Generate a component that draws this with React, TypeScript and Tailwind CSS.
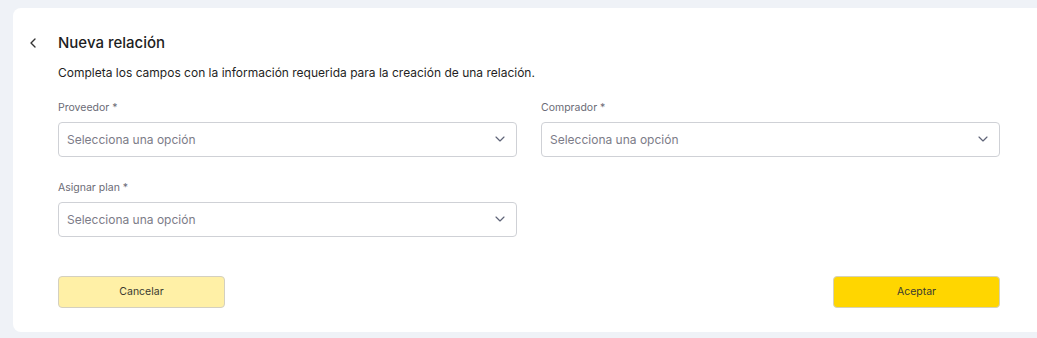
import { ChevronDown, ChevronLeft } from "lucide-react";

function SelectField({ label }: { label: string }) {
  return (
    <div className="flex flex-col">
      <span className="mb-[7px] pt-[1px] text-[10.5px] leading-[14px] text-[#6b6b76]">{label}</span>
      <div className="flex h-[35px] items-center justify-between rounded-[4px] border border-[#cfd1d6] bg-white pl-2 pr-[8px]">
        <span className="pt-[1px] text-[12px] text-[#7c7c88]">Selecciona una opción</span>
        <ChevronDown className="h-4 w-4 text-[#5f6478]" strokeWidth={1.75} />
      </div>
    </div>
  );
}

export default function App() {
  return (
    <div className="h-[338px] w-[1037px] overflow-hidden bg-[#eff2f7] pl-[13px] pt-2 font-['Inter',sans-serif]">
      <div className="w-[1032px] rounded-lg bg-white pb-6 pl-[45px] pr-[45px] pt-[26px]">
        <header className="relative flex h-[18px] items-center">
          <ChevronLeft className="absolute left-[-33px] h-4 w-4 text-[#333]" strokeWidth={2} />
          <h1 className="text-[15px] font-medium text-[#1d1d22]">Nueva relación</h1>
        </header>
        <p className="mt-[11px] text-[12px] leading-[19.5px] text-[#1f1f24]">
          Completa los campos con la información requerida para la creación de una relación.
        </p>

        <div className="mt-[17px] grid grid-cols-2 gap-x-[24px] gap-y-[23px]">
          <SelectField label="Proveedor *" />
          <SelectField label="Comprador *" />
          <SelectField label="Asignar plan *" />
        </div>

        <div className="mt-[39px] flex justify-between">
          <button className="h-8 w-[167px] rounded-[4px] border border-[#d4d0c0] bg-[#fff0a6] text-[10.5px] text-[#3a3a30]">
            Cancelar
          </button>
          <button className="h-8 w-[167px] rounded-[4px] border border-[#d6d2b8] bg-[#ffd600] text-[10.5px] text-[#3a3a30]">
            Aceptar
          </button>
        </div>
      </div>
    </div>
  );
}
